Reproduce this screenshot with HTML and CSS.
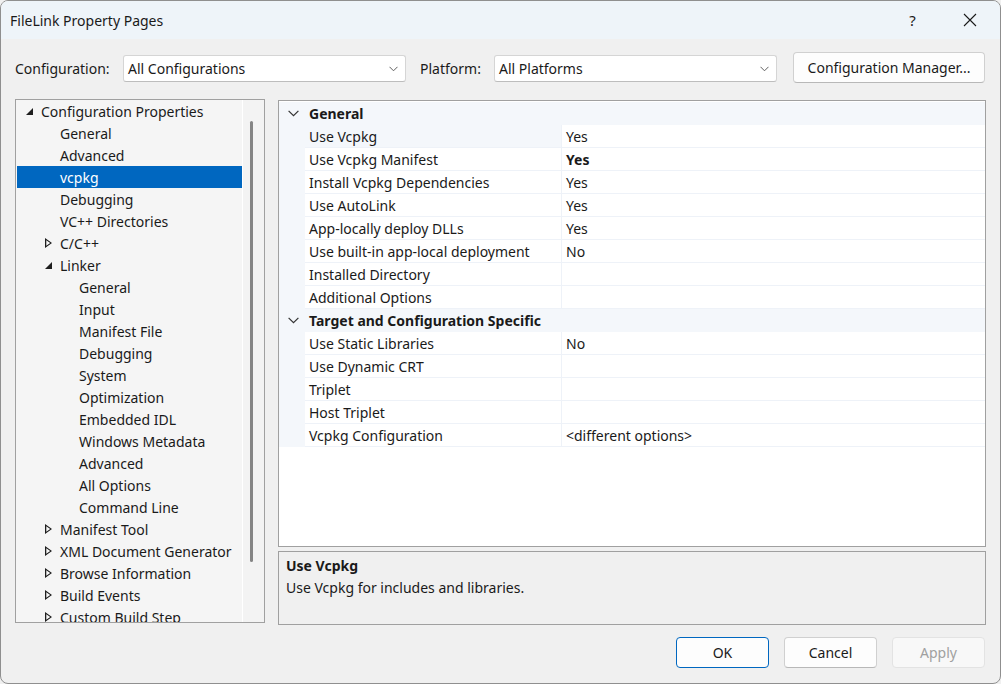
FILE: index.html
```html
<!DOCTYPE html>
<html lang="en">
<head>
<meta charset="utf-8">
<title>FileLink Property Pages</title>
<link rel="stylesheet" href="styles.css">
</head>
<body>
<div class="window">
  <div class="titlebar">
    <span class="title">FileLink Property Pages</span>
    <span class="caption-btn help">?</span>
    <span class="caption-btn close">
      <svg width="14" height="14" viewBox="0 0 14 14"><path d="M1 1 L13 13 M13 1 L1 13" stroke="#1a1a1a" stroke-width="1.1" fill="none"/></svg>
    </span>
  </div>

  <div class="body">
    <div class="config-row">
      <span class="lbl lbl-config">Configuration:</span>
      <div class="combo">
        <span>All Configurations</span>
        <svg class="chev" width="9" height="6" viewBox="0 0 9 6"><path d="M0.5 0.8 L4.5 4.8 L8.5 0.8" stroke="#606060" stroke-width="1" fill="none"/></svg>
      </div>
      <span class="lbl lbl-platform">Platform:</span>
      <div class="combo">
        <span>All Platforms</span>
        <svg class="chev" width="9" height="6" viewBox="0 0 9 6"><path d="M0.5 0.8 L4.5 4.8 L8.5 0.8" stroke="#606060" stroke-width="1" fill="none"/></svg>
      </div>
      <button class="btn btn-manager">Configuration Manager...</button>
    </div>

    <div class="main">
      <div class="tree">
        <div class="tree-list">
          <div class="node lv0"><span class="tog"><i class="tri-open"></i></span>Configuration Properties</div>
          <div class="node lv1"><span class="tog"></span>General</div>
          <div class="node lv1"><span class="tog"></span>Advanced</div>
          <div class="node lv1 selected"><span class="tog"></span>vcpkg</div>
          <div class="node lv1"><span class="tog"></span>Debugging</div>
          <div class="node lv1"><span class="tog"></span>VC++ Directories</div>
          <div class="node lv1"><span class="tog"><i class="tri-closed"></i></span>C/C++</div>
          <div class="node lv1"><span class="tog"><i class="tri-open"></i></span>Linker</div>
          <div class="node lv2"><span class="tog"></span>General</div>
          <div class="node lv2"><span class="tog"></span>Input</div>
          <div class="node lv2"><span class="tog"></span>Manifest File</div>
          <div class="node lv2"><span class="tog"></span>Debugging</div>
          <div class="node lv2"><span class="tog"></span>System</div>
          <div class="node lv2"><span class="tog"></span>Optimization</div>
          <div class="node lv2"><span class="tog"></span>Embedded IDL</div>
          <div class="node lv2"><span class="tog"></span>Windows Metadata</div>
          <div class="node lv2"><span class="tog"></span>Advanced</div>
          <div class="node lv2"><span class="tog"></span>All Options</div>
          <div class="node lv2"><span class="tog"></span>Command Line</div>
          <div class="node lv1"><span class="tog"><i class="tri-closed"></i></span>Manifest Tool</div>
          <div class="node lv1"><span class="tog"><i class="tri-closed"></i></span>XML Document Generator</div>
          <div class="node lv1"><span class="tog"><i class="tri-closed"></i></span>Browse Information</div>
          <div class="node lv1"><span class="tog"><i class="tri-closed"></i></span>Build Events</div>
          <div class="node lv1"><span class="tog"><i class="tri-closed"></i></span>Custom Build Step</div>
        </div>
        <div class="tree-scroll"><div class="thumb"></div></div>
      </div>

      <div class="right">
        <div class="grid">
          <div class="cat">
            <span class="cat-tog"><svg width="11" height="7" viewBox="0 0 11 7"><path d="M0.6 0.8 L5.5 5.7 L10.4 0.8" stroke="#333" stroke-width="1.2" fill="none"/></svg></span>
            <span class="cat-name">General</span>
          </div>
          <div class="prop current"><span class="gut"></span><span class="name">Use Vcpkg</span><span class="val">Yes</span></div>
          <div class="prop"><span class="gut"></span><span class="name">Use Vcpkg Manifest</span><span class="val bold">Yes</span></div>
          <div class="prop"><span class="gut"></span><span class="name">Install Vcpkg Dependencies</span><span class="val">Yes</span></div>
          <div class="prop"><span class="gut"></span><span class="name">Use AutoLink</span><span class="val">Yes</span></div>
          <div class="prop"><span class="gut"></span><span class="name">App-locally deploy DLLs</span><span class="val">Yes</span></div>
          <div class="prop"><span class="gut"></span><span class="name">Use built-in app-local deployment</span><span class="val">No</span></div>
          <div class="prop"><span class="gut"></span><span class="name">Installed Directory</span><span class="val"></span></div>
          <div class="prop"><span class="gut"></span><span class="name">Additional Options</span><span class="val"></span></div>
          <div class="cat">
            <span class="cat-tog"><svg width="11" height="7" viewBox="0 0 11 7"><path d="M0.6 0.8 L5.5 5.7 L10.4 0.8" stroke="#333" stroke-width="1.2" fill="none"/></svg></span>
            <span class="cat-name">Target and Configuration Specific</span>
          </div>
          <div class="prop"><span class="gut"></span><span class="name">Use Static Libraries</span><span class="val">No</span></div>
          <div class="prop"><span class="gut"></span><span class="name">Use Dynamic CRT</span><span class="val"></span></div>
          <div class="prop"><span class="gut"></span><span class="name">Triplet</span><span class="val"></span></div>
          <div class="prop"><span class="gut"></span><span class="name">Host Triplet</span><span class="val"></span></div>
          <div class="prop"><span class="gut"></span><span class="name">Vcpkg Configuration</span><span class="val">&lt;different options&gt;</span></div>
        </div>
        <div class="desc">
          <div class="desc-title">Use Vcpkg</div>
          <div class="desc-text">Use Vcpkg for includes and libraries.</div>
        </div>
      </div>
    </div>

    <div class="footer">
      <button class="btn btn-ok">OK</button>
      <button class="btn">Cancel</button>
      <button class="btn btn-disabled">Apply</button>
    </div>
  </div>
</div>
</body>
</html>
```

FILE: styles.css
```css
* { box-sizing: border-box; }

html, body {
  margin: 0;
  padding: 0;
  background: #f0f0f0;
}

body {
  font-family: "Segoe UI", "Noto Sans", sans-serif;
  font-size: 14px;
  color: #1a1a1a;
}

.window {
  width: 1001px;
  height: 684px;
  border: 1px solid #8f8f8f;
  border-radius: 8px;
  overflow: hidden;
  background: #f0f0f0;
  display: flex;
  flex-direction: column;
}

/* caption */
.titlebar {
  height: 38px;
  flex: none;
  background: #eef4f9;
  display: flex;
  align-items: center;
  padding-left: 9px;
  padding-right: 2px;
}
.title {
  flex: 1;
  font-size: 14px;
}
.caption-btn {
  width: 57px;
  height: 38px;
  display: flex;
  align-items: center;
  justify-content: center;
  font-size: 15px;
}

/* dialog body */
.body {
  flex: 1;
  display: flex;
  flex-direction: column;
  padding: 14px 14px 0 14px;
}

.config-row {
  height: 31px;
  display: flex;
  align-items: center;
}
.lbl { flex: none; }
.lbl-config { width: 108px; }
.lbl-platform { width: 74px; margin-left: 14px; }

.combo {
  width: 283px;
  height: 27px;
  background: #fff;
  border: 1px solid #d5d5d5;
  border-bottom-color: #bdbdbd;
  border-radius: 3px;
  display: flex;
  align-items: center;
  padding: 0 6px 0 4px;
}
.combo span { flex: 1; }
.chev { flex: none; margin-right: 1px; }

.btn {
  font: inherit;
  color: #1a1a1a;
  height: 31px;
  width: 93px;
  background: #fdfdfd;
  border: 1px solid #d0d0d0;
  border-bottom-color: #b8b8b8;
  border-radius: 4px;
  padding: 0;
}
.btn-manager {
  width: 192px;
  margin-left: 16px;
  align-self: flex-start;
  margin-top: -1px;
}

/* tree + grid */
.main {
  margin-top: 15px;
  height: 526px;
  display: flex;
  gap: 13px;
}

.tree {
  width: 250px;
  height: 524px;
  flex: none;
  border: 1px solid #a0a0a0;
  background: #f5f5f5;
  display: flex;
  overflow: hidden;
}
.tree-list {
  width: 227px;
  flex: none;
  border-right: 1px solid #ffffff;
}
.node {
  height: 22px;
  margin-left: 1px;
  display: flex;
  align-items: center;
  white-space: nowrap;
}
.node.selected {
  background: #0067c0;
  color: #fff;
}
.lv0 { padding-left: 5px; }
.lv1 { padding-left: 24px; }
.lv2 { padding-left: 43px; }

.tog {
  width: 19px;
  height: 22px;
  flex: none;
  display: flex;
  align-items: center;
  padding-left: 3px;
}
.tri-open {
  width: 0;
  height: 0;
  border-left: 7px solid transparent;
  border-bottom: 7px solid #1e1e1e;
  margin-top: 1px;
  margin-left: 1px;
}
.tri-closed {
  width: 7px;
  height: 10px;
  background: #1e1e1e;
  clip-path: polygon(0 0, 100% 50%, 0 100%, 0 0, 1.3px 2.2px, 1.3px 7.8px, 5.2px 5px, 1.3px 2.2px);
  margin-left: 1px;
}

.tree-scroll {
  flex: 1;
  background: #f3f3f3;
  padding-top: 21px;
}
.thumb {
  width: 3px;
  height: 441px;
  margin-left: 7px;
  background: #858585;
  border-radius: 1.5px;
}

.right {
  flex: 1;
  display: flex;
  flex-direction: column;
  padding-top: 1px;
  gap: 4px;
}

.grid {
  height: 447px;
  flex: none;
  border: 1px solid #a0a0a0;
  background: #fff;
  padding-top: 1px;
}
.cat {
  height: 23px;
  background: #f4f7fb;
  display: flex;
  align-items: center;
}
.cat-tog {
  width: 26px;
  display: flex;
  justify-content: center;
  padding-left: 3px;
}
.cat-name {
  font-weight: bold;
  padding-left: 4px;
}
.prop {
  height: 23px;
  display: grid;
  grid-template-columns: 26px 257px 1fr;
}
.prop .gut { background: #f4f7fb; }
.prop .name,
.prop .val {
  border-bottom: 1px solid #eef2f8;
  display: flex;
  align-items: center;
  padding-left: 4px;
  white-space: nowrap;
}
.prop .name { border-right: 1px solid #eef2f8; }
.prop.current .name { background: #f4f7fb; }
.bold { font-weight: bold; }

.desc {
  height: 74px;
  border: 1px solid #a0a0a0;
  background: #f0f0f0;
  padding: 3px 7px;
  line-height: 22px;
}
.desc-title { font-weight: bold; }

.footer {
  margin-top: 12px;
  display: flex;
  justify-content: flex-end;
  gap: 15px;
  padding-right: 1px;
}
.btn-ok {
  border: 1px solid #0067c0;
}
.btn-disabled {
  color: #a0a0a0;
  background: #f8f8f8;
  border-color: #e3e3e3;
}
```
